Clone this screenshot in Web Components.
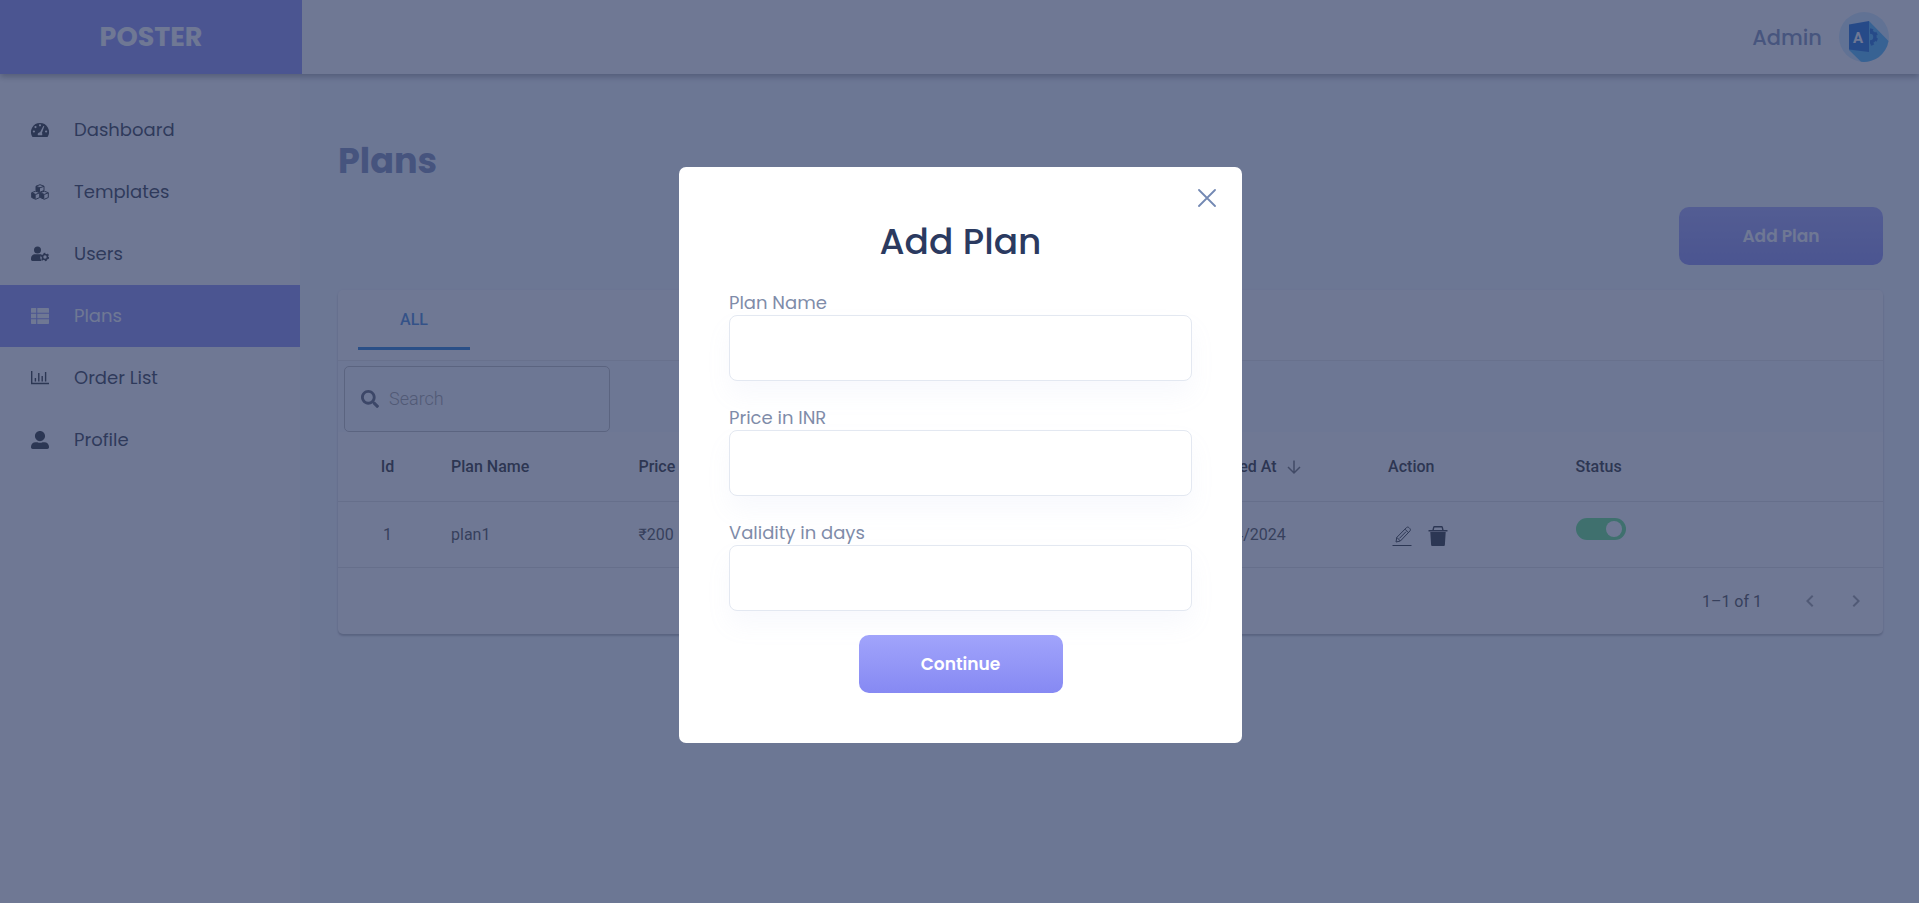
<!DOCTYPE html>
<html lang="en">
<head>
<meta charset="UTF-8">
<meta name="viewport" content="width=device-width, initial-scale=1">
<title>Poster Admin</title>
<style>
    body {
        margin: 0;
        background: #f5faff;
        font-family: Poppins, Inter, "Open Sans", sans-serif;
        font-size: 18px;
        color: #2a3142;
    }
</style>
</head>
<body>
<poster-app></poster-app>

<script>
const icons = {
    dashboard: `<svg viewBox="0 0 18 18"><path fill-rule="evenodd" d="M9 2a9 9 0 0 0-7.8 13.5c.2.4.5.5.9.5h13.8c.4 0 .7-.1.9-.5A9 9 0 0 0 9 2zM9 3.200a1.100 1.100 0 1 1 0 2.200a1.100 1.100 0 1 1 0-2.200zM4.500 5a1.100 1.100 0 1 1 0 2.200a1.100 1.100 0 1 1 0-2.200zM2.900 9.400a1.100 1.100 0 1 1 0 2.200a1.100 1.100 0 1 1 0-2.200zM15.100 9.400a1.100 1.100 0 1 1 0 2.200a1.100 1.100 0 1 1 0-2.200zM12.300 4.900l1 .3-2.400 6.800c.5.600.5 1.400.2 2.200H6.900c-.6-1.400.4-3 2.200-3z"/></svg>`,
    templates: `<svg viewBox="0 0 18 18" fill="none" stroke="currentColor" stroke-width="1"><path d="M9 1.700l4 1.500v4.300L9 9.200 5 7.500V3.200z"/><path d="M5 3.300l4 1.500 4-1.500"/><path d="M4.700 8.200l4 1.500v4.800l-4 1.800-4-1.800V9.700z"/><path d="M.9 9.900l3.800 1.500 3.900-1.500"/><path d="M13.300 8.200l4 1.500v4.800l-4 1.800-4-1.800V9.700z"/><path d="M9.500 9.900l3.800 1.500 3.900-1.500"/><path fill="currentColor" stroke="none" d="M5 3.500l4 1.500v4L5 7.500zM.7 10l4 1.500v4.500l-4-1.500zM9.300 10l4 1.500v4.500l-4-1.500z"/></svg>`,
    users: `<svg viewBox="0 0 18 18"><circle cx="6.500" cy="5" r="3.500"/><path d="M4 9.300h5.200c.4 0 .9.100 1.300.3a5 5 0 0 0 .2 6.400H1.400C.6 16 0 15.400 0 14.600v-1.200C0 11 1.700 9.300 4 9.300z"/><circle cx="14" cy="12" r="2.500" fill="none" stroke="currentColor" stroke-width="1.600"/><circle cx="14" cy="12" r="3.700" fill="none" stroke="currentColor" stroke-width="1.200" stroke-dasharray="1.900 1.970"/></svg>`,
    plans: `<svg viewBox="0 0 18 18"><path d="M.8 1h4.400v4.700H0V1.800C0 1.400.4 1 .8 1zM6.300 1h10.900c.4 0 .8.400.8.800v3.900H6.300zM0 6.700h5.200v4.600H0zM6.300 6.700H18v4.600H6.300zM0 12.300h5.200V17H.8c-.4 0-.8-.4-.8-.8zM6.300 12.300H18v3.900c0 .4-.4.800-.8.800H6.300z"/></svg>`,
    orders: `<svg viewBox="0 0 18 18" fill="none" stroke="currentColor" stroke-width="1.400"><path d="M.7 2v12.500H18"/><path d="M4.400 12.500V9M7.800 12.500V4M11.200 12.500V7M14.600 12.500V3"/></svg>`,
    profile: `<svg viewBox="0 0 512 512"><path d="M256 288c79.500 0 144-64.500 144-144S335.500 0 256 0 112 64.500 112 144s64.500 144 144 144zm128 32h-55.100c-22.200 10.200-46.900 16-72.900 16s-50.600-5.800-72.900-16H128C57.300 320 0 377.300 0 448v16c0 26.500 21.500 48 48 48h416c26.500 0 48-21.500 48-48v-16c0-70.700-57.300-128-128-128z"/></svg>`,
    search: `<svg viewBox="0 0 512 512"><path d="M505 442.700L405.300 343c-4.500-4.500-10.600-7-17-7H372c27.600-35.300 44-79.700 44-128C416 93.100 322.900 0 208 0S0 93.100 0 208s93.100 208 208 208c48.300 0 92.700-16.400 128-44v16.300c0 6.400 2.500 12.500 7 17l99.700 99.700c9.400 9.400 24.600 9.400 33.900 0l28.300-28.300c9.400-9.400 9.400-24.600.1-34zM208 336c-70.700 0-128-57.200-128-128 0-70.700 57.200-128 128-128 70.700 0 128 57.200 128 128 0 70.700-57.200 128-128 128z"/></svg>`,
    arrow: `<svg viewBox="0 0 18 18" fill="none" stroke="currentColor" stroke-width="1.500"><path d="M9 2.500v12.500M3 9l6 6 6-6"/></svg>`,
    edit: `<svg viewBox="0 0 20 20" fill="none" stroke="currentColor" stroke-width="1"><path d="M.5 19.500h19"/><path d="M4 16l.8-4.600L14.500 1.600c.7-.7 1.700-.7 2.400 0l1 1c.7.700.7 1.700 0 2.400L8.400 15z"/><path d="M13 3.200l3.500 3.500M14 5.700l-6.600 6.700M4.800 11.400l3.600 3.600"/></svg>`,
    trash: `<svg viewBox="0 0 20 20"><path d="M2.300 6h15.400l-.8 12.700c0 .7-.6 1.300-1.300 1.300H4.400c-.7 0-1.300-.6-1.300-1.300z"/><path d="M.5 4h19v1.500H.5z"/><path fill="none" stroke="currentColor" stroke-width="1.400" d="M5 4.500l.7-3.100c.1-.4.3-.6.7-.6h7.200c.4 0 .6.200.7.600l.7 3.100"/></svg>`,
    prev: `<svg viewBox="0 0 24 24"><path d="M15.410 7.410L14 6l-6 6 6 6 1.410-1.410L10.830 12z"/></svg>`,
    next: `<svg viewBox="0 0 24 24"><path d="M10 6L8.590 7.410 13.170 12l-4.580 4.590L10 18l6-6z"/></svg>`,
    close: `<svg viewBox="0 0 18 18" fill="none" stroke="currentColor" stroke-width="1.800" stroke-linecap="round"><path d="M1 1l16 16M17 1L1 17"/></svg>`,
    avatar: `<svg viewBox="0 0 50 50"><circle cx="25" cy="25" r="25" fill="#d0eaff"/><path d="M30 9l19.500 20A25 25 0 0 1 22 49.800L10 38z" fill="#45b4fa"/><path d="M10 12.500L30 9v31l-20-2.500z" fill="#0b66d8"/><g fill="none" stroke="#0b66d8"><path d="M31 20a5 5 0 0 1 0 10" stroke-width="3.500"/><path d="M31 17.800a7.300 7.300 0 0 1 0 14.500" stroke-width="3" stroke-dasharray="3 2.700"/></g><text x="19" y="31" text-anchor="middle" fill="#fff" font-family="Roboto, sans-serif" font-size="15" font-weight="700">A</text></svg>`
};

class PosterIcon extends HTMLElement {
    constructor() {
        super();
        this.attachShadow({mode: "open"});
    }

    connectedCallback() {
        this.shadowRoot.innerHTML = `
            <style>
                :host { display: inline-block; flex: none; width: 18px; height: 18px; }
                svg { display: block; width: 100%; height: 100%; fill: currentColor; }
                svg[fill="none"] { fill: none; }
            </style>
            ${icons[this.getAttribute("name")] ?? ""}
        `;
    }
}

class PosterButton extends HTMLElement {
    constructor() {
        super();
        this.attachShadow({mode: "open"});
        this.shadowRoot.innerHTML = `
            <style>
                :host { display: inline-block; }
                button {
                    display: block;
                    min-width: 204px;
                    padding: 16px 24px;
                    border: 0;
                    border-radius: 10px;
                    background: linear-gradient(#a1a4fb, #8689f3);
                    color: #fff;
                    font: 600 17px/26px Poppins, Inter, "Open Sans", sans-serif;
                    cursor: pointer;
                }
            </style>
            <button type="button"><slot></slot></button>
        `;
    }
}

class PosterHeader extends HTMLElement {
    constructor() {
        super();
        this.attachShadow({mode: "open"});
        this.shadowRoot.innerHTML = `
            <style>
                :host {
                    display: flex;
                    justify-content: space-between;
                    position: relative;
                    height: 74px;
                    background: #fff;
                    box-shadow: 0 3px 6px rgba(0, 0, 0, 0.35);
                }
                .brand {
                    display: flex;
                    align-items: center;
                    justify-content: center;
                    width: 302px;
                    background: #8689f3;
                    color: #fff;
                    font-size: 27px;
                    font-weight: 700;
                    text-decoration: none;
                }
                .account {
                    display: flex;
                    align-items: center;
                    gap: 17px;
                    padding-right: 30px;
                    color: #7a89b4;
                    font-size: 21px;
                    font-weight: 500;
                }
                poster-icon { width: 50px; height: 50px; }
            </style>
            <a class="brand" href="#">POSTER</a>
            <div class="account"><span>Admin</span><poster-icon name="avatar"></poster-icon></div>
        `;
    }
}

class NavItem extends HTMLElement {
    constructor() {
        super();
        this.attachShadow({mode: "open"});
    }

    connectedCallback() {
        this.shadowRoot.innerHTML = `
            <style>
                :host { display: block; }
                a {
                    display: flex;
                    align-items: center;
                    gap: 25px;
                    height: 62px;
                    padding-left: 31px;
                    color: inherit;
                    line-height: 26px;
                    text-decoration: none;
                }
                poster-icon { color: #212529; }
                :host([active]) a { background: #8689f3; color: #fff; }
                :host([active]) poster-icon { color: #fff; }
            </style>
            <a href="#"><poster-icon name="${this.getAttribute("icon")}"></poster-icon><slot></slot></a>
        `;
    }
}

class PosterSidebar extends HTMLElement {
    constructor() {
        super();
        this.attachShadow({mode: "open"});
        this.shadowRoot.innerHTML = `
            <style>
                :host { display: block; width: 300px; flex: none; background: #fff; }
                nav { padding-top: 25px; }
            </style>
            <nav>
                <nav-item icon="dashboard">Dashboard</nav-item>
                <nav-item icon="templates">Templates</nav-item>
                <nav-item icon="users">Users</nav-item>
                <nav-item icon="plans" active>Plans</nav-item>
                <nav-item icon="orders">Order List</nav-item>
                <nav-item icon="profile">Profile</nav-item>
            </nav>
        `;
    }
}

class StatusSwitch extends HTMLElement {
    constructor() {
        super();
        this.attachShadow({mode: "open"});
        this.shadowRoot.innerHTML = `
            <style>
                :host { display: block; }
                input {
                    appearance: none;
                    display: flex;
                    justify-content: flex-start;
                    align-items: center;
                    box-sizing: border-box;
                    width: 50px;
                    height: 22px;
                    margin: 0;
                    padding: 0 4px;
                    border-radius: 11px;
                    background: #bbb;
                    cursor: pointer;
                }
                input:checked { justify-content: flex-end; background: #5ee580; }
                input::before {
                    content: "";
                    width: 16px;
                    height: 16px;
                    border-radius: 50%;
                    background: #fff;
                }
            </style>
            <input type="checkbox" role="switch" aria-label="Plan status" checked>
        `;
    }
}

class PlansTable extends HTMLElement {
    constructor() {
        super();
        this.attachShadow({mode: "open"});
        this.shadowRoot.innerHTML = `
            <style>
                :host {
                    display: block;
                    border-radius: 5px;
                    background: #fff;
                    box-shadow: 0 2px 2px rgba(0, 0, 0, 0.25), 0 0 3px rgba(0, 0, 0, 0.05);
                    font-family: Roboto, sans-serif;
                    font-size: 16px;
                    color: #444;
                }
                button { border: 0; background: none; font: inherit; color: inherit; cursor: pointer; }
                .tabs {
                    padding: 0 20px;
                    border-bottom: 1px solid #e6e6e6;
                }
                .tabs button {
                    width: 112px;
                    height: 60px;
                    margin-bottom: 10px;
                    padding: 2px 0 0;
                    border-bottom: 3px solid #1976d2;
                    color: #3a7fd5;
                    font-weight: 500;
                }
                .tools { padding: 5px 6px 0; background: #f9fafe; }
                .search {
                    display: flex;
                    align-items: center;
                    gap: 10px;
                    box-sizing: border-box;
                    width: 266px;
                    height: 66px;
                    padding: 0 16px;
                    border: 1px solid #bbb;
                    border-radius: 5px;
                    color: #555a6c;
                }
                .search input {
                    min-width: 0;
                    flex: 1;
                    padding: 0;
                    border: 0;
                    outline: 0;
                    background: none;
                    font: 300 18px/24px Roboto, sans-serif;
                }
                .search input::placeholder { color: #999; opacity: 1; }
                table { width: 100%; border-collapse: collapse; table-layout: fixed; }
                th, td {
                    padding: 0 14px;
                    border-bottom: 1px solid #e0e0e0;
                    text-align: left;
                    white-space: nowrap;
                }
                th { height: 69px; color: #222; font-weight: 500; }
                td { height: 65px; }
                th:first-child, td:first-child { text-align: center; }
                .id { width: 99px; }
                .rest { width: 134px; }
                .sort { display: flex; align-items: center; gap: 8px; }
                .sort poster-icon { color: #666; }
                .actions { display: flex; gap: 16px; padding-top: 3px; color: #212529; }
                .actions button { padding: 0; }
                .actions poster-icon { display: block; width: 20px; height: 20px; }
                .actions button:first-child { padding-left: 4px; }
                td.status { vertical-align: top; padding-top: 16px; height: 49px; }
                .pager {
                    display: flex;
                    align-items: center;
                    justify-content: flex-end;
                    height: 66px;
                    padding-right: 15px;
                    gap: 22px;
                }
                .pager span { padding-right: 14px; }
                .pager button { padding: 0; color: #999; }
                .pager poster-icon { display: block; width: 24px; height: 24px; }
            </style>
            <div class="tabs" role="tablist"><button type="button" role="tab" aria-selected="true">ALL</button></div>
            <div class="tools">
                <label class="search">
                    <poster-icon name="search"></poster-icon>
                    <input type="search" placeholder="Search" aria-label="Search">
                </label>
            </div>
            <table>
                <colgroup><col class="id"><col span="7"><col class="rest"></colgroup>
                <thead>
                    <tr>
                        <th>Id</th><th>Plan Name</th><th>Price</th><th></th><th></th>
                        <th><div class="sort">Created At<poster-icon name="arrow"></poster-icon></div></th>
                        <th>Action</th><th>Status</th><th></th>
                    </tr>
                </thead>
                <tbody>
                    <tr>
                        <td>1</td><td>plan1</td><td>₹200</td><td></td><td></td>
                        <td>12/04/2024</td>
                        <td>
                            <div class="actions">
                                <button type="button" aria-label="Edit"><poster-icon name="edit"></poster-icon></button>
                                <button type="button" aria-label="Delete"><poster-icon name="trash"></poster-icon></button>
                            </div>
                        </td>
                        <td class="status"><status-switch></status-switch></td>
                        <td></td>
                    </tr>
                </tbody>
            </table>
            <div class="pager">
                <span>1–1 of 1</span>
                <button type="button" aria-label="Previous page" disabled><poster-icon name="prev"></poster-icon></button>
                <button type="button" aria-label="Next page" disabled><poster-icon name="next"></poster-icon></button>
            </div>
        `;
    }
}

class FormField extends HTMLElement {
    constructor() {
        super();
        this.attachShadow({mode: "open"});
    }

    connectedCallback() {
        this.shadowRoot.innerHTML = `
            <style>
                :host { display: block; }
                label { display: block; color: #7f8ca9; line-height: 25px; }
                input {
                    display: block;
                    box-sizing: border-box;
                    width: 100%;
                    height: 66px;
                    padding: 0 20px;
                    border: 1px solid #e3e8f1;
                    border-radius: 8px;
                    outline: 0;
                    background: #fff;
                    box-shadow: 0 14px 24px rgba(160, 175, 235, 0.08);
                    font: inherit;
                    color: #283c63;
                }
            </style>
            <label for="field">${this.getAttribute("label")}</label>
            <input id="field" type="${this.getAttribute("type") ?? "text"}">
        `;
    }
}

class PlanDialog extends HTMLElement {
    constructor() {
        super();
        this.attachShadow({mode: "open"});
        this.shadowRoot.innerHTML = `
            <style>
                :host {
                    display: flex;
                    align-items: center;
                    justify-content: center;
                    position: fixed;
                    inset: 0;
                    padding: 7px 0 0 2px;
                    background: rgba(50, 62, 102, 0.7);
                }
                .box {
                    position: relative;
                    box-sizing: border-box;
                    width: 563px;
                    max-width: 100%;
                    padding: 50px;
                    border-radius: 7px;
                    background: #fff;
                }
                .close {
                    position: absolute;
                    top: 22px;
                    right: 26px;
                    padding: 0;
                    border: 0;
                    background: none;
                    color: #7388b3;
                    cursor: pointer;
                }
                .close poster-icon { display: block; }
                h2 {
                    margin: 0 0 23px;
                    color: #2b3a60;
                    font-size: 36px;
                    font-weight: 500;
                    line-height: 50px;
                    text-align: center;
                }
                form { display: grid; gap: 24px; }
                poster-button { justify-self: center; }
            </style>
            <div class="box" role="dialog" aria-modal="true" aria-labelledby="title">
                <button class="close" type="button" aria-label="Close"><poster-icon name="close"></poster-icon></button>
                <h2 id="title">Add Plan</h2>
                <form>
                    <form-field label="Plan Name"></form-field>
                    <form-field label="Price in INR"></form-field>
                    <form-field label="Validity in days"></form-field>
                    <poster-button>Continue</poster-button>
                </form>
            </div>
        `;
        this.shadowRoot.querySelector(".close").addEventListener("click", () => this.remove());
    }
}

class PosterApp extends HTMLElement {
    constructor() {
        super();
        this.attachShadow({mode: "open"});
        this.shadowRoot.innerHTML = `
            <style>
                :host { display: flex; flex-direction: column; min-height: 100vh; }
                .body { display: flex; flex: 1; }
                main { flex: 1; min-width: 0; padding: 62px 36px 60px 38px; }
                h1 { margin: 0; color: #7585b4; font-size: 35px; font-weight: 700; line-height: 50px; }
                .bar { display: flex; justify-content: flex-end; padding: 21px 0 25px; }
            </style>
            <poster-header></poster-header>
            <div class="body">
                <poster-sidebar></poster-sidebar>
                <main>
                    <h1>Plans</h1>
                    <div class="bar"><poster-button>Add Plan</poster-button></div>
                    <plans-table></plans-table>
                </main>
            </div>
            <plan-dialog></plan-dialog>
        `;
    }
}

customElements.define("poster-icon", PosterIcon);
customElements.define("poster-button", PosterButton);
customElements.define("poster-header", PosterHeader);
customElements.define("nav-item", NavItem);
customElements.define("poster-sidebar", PosterSidebar);
customElements.define("status-switch", StatusSwitch);
customElements.define("plans-table", PlansTable);
customElements.define("form-field", FormField);
customElements.define("plan-dialog", PlanDialog);
customElements.define("poster-app", PosterApp);
</script>
</body>
</html>
